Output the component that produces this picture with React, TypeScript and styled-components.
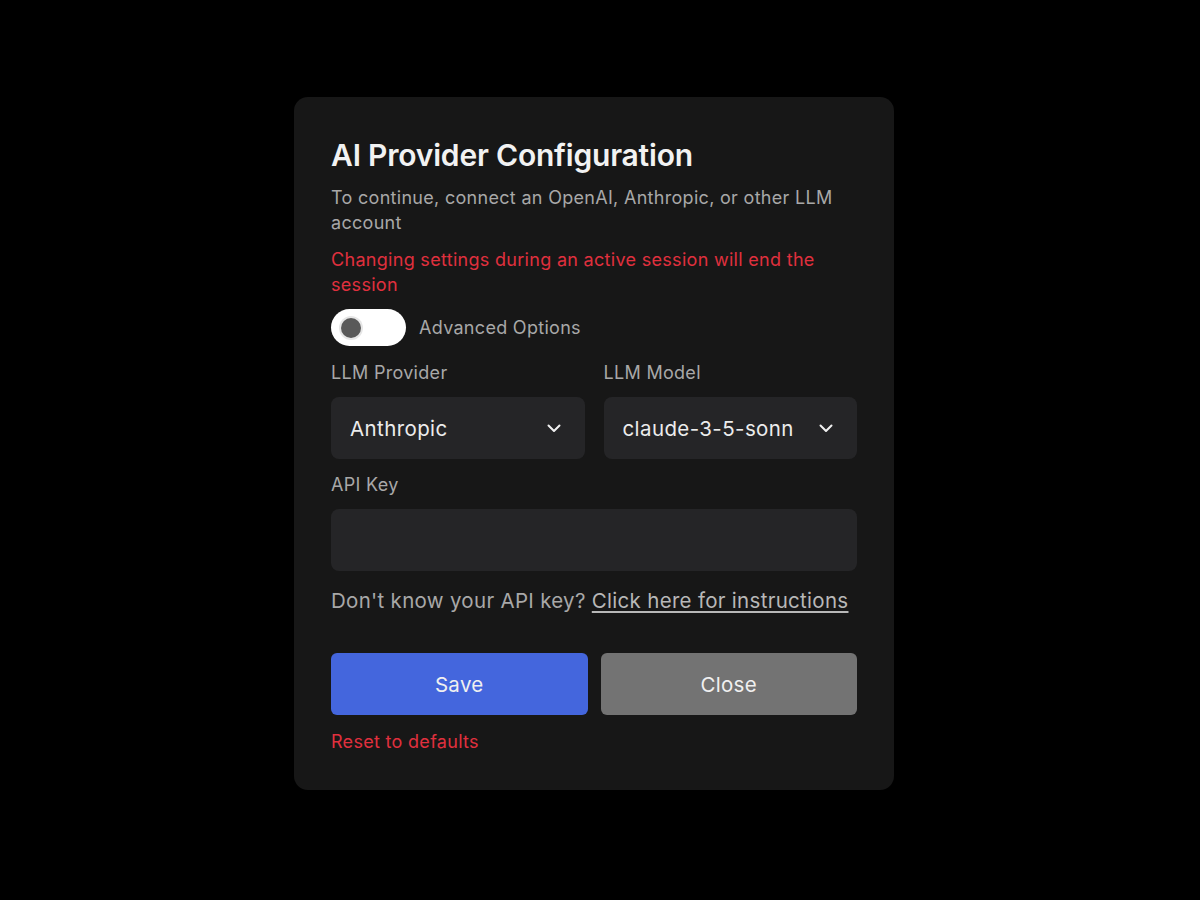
import React, { useState } from "react";
import styled, { createGlobalStyle } from "styled-components";

const GlobalStyle = createGlobalStyle`
  html, body {
    margin: 0;
    padding: 0;
    background: #000;
    font-family: Inter, "Noto Sans", "Liberation Sans", sans-serif;
  }
  * { box-sizing: border-box; }
`;

const Page = styled.div`
  width: 1200px;
  height: 900px;
  display: flex;
  padding: 97px 0 0 294px;
`;

const Modal = styled.div`
  width: 600px;
  height: 693px;
  background: #171717;
  border-radius: 14px;
  padding: 38px 37px 0 37px;
  display: flex;
  flex-direction: column;
`;

const Title = styled.h2`
  margin: 0;
  font-size: 30px;
  font-weight: 600;
  color: #f2f2f2;
  letter-spacing: -0.2px;
  line-height: 40px;
`;

const Subtitle = styled.p`
  margin: 10px 0 0;
  font-size: 18px;
  letter-spacing: 0.3px;
  line-height: 25px;
  color: #a8a8a8;
`;

const Warning = styled.p`
  margin: 12px 0 0;
  font-size: 18px;
  letter-spacing: 0.3px;
  line-height: 25px;
  color: #e0303e;
`;

const ToggleRow = styled.div`
  display: flex;
  align-items: center;
  gap: 13px;
  margin-top: 12px;
`;

const Switch = styled.button<{ $on: boolean }>`
  width: 75px;
  height: 37px;
  border-radius: 19px;
  border: none;
  background: ${({ $on }) => ($on ? "#4466dd" : "#fff")};
  padding: 0 10px;
  display: flex;
  align-items: center;
  justify-content: ${({ $on }) => ($on ? "flex-end" : "flex-start")};
  cursor: pointer;
`;

const Knob = styled.span`
  width: 20px;
  height: 20px;
  border-radius: 50%;
  background: #595959;
  box-shadow: 0 0 0 2px #e6e6e6;
`;

const ToggleLabel = styled.span`
  font-size: 18px;
  letter-spacing: 0.3px;
  color: #a8a8a8;
`;

const FieldGrid = styled.div`
  display: grid;
  grid-template-columns: minmax(0, 1fr) minmax(0, 1fr);
  column-gap: 19px;
  margin-top: 14px;
`;

const Field = styled.div`
  display: flex;
  flex-direction: column;
  min-width: 0;
`;

const Label = styled.label<{ $gap?: number }>`
  font-size: 18px;
  letter-spacing: 0.3px;
  color: #a8a8a8;
  line-height: 25px;
  margin-bottom: ${({ $gap }) => $gap ?? 12}px;
`;

const SelectBox = styled.div`
  height: 62px;
  background: #252527;
  border-radius: 8px;
  display: flex;
  align-items: center;
  padding: 0 24px 0 19px;
  font-size: 20.5px;
  letter-spacing: 0.4px;
  color: #ececec;
  white-space: nowrap;
  min-width: 0;
`;

const SelectText = styled.span`
  flex: 1;
  min-width: 0;
  overflow: hidden;
  margin-right: 26px;
`;

const KeyField = styled(Field)`
  margin-top: 13px;
`;

const Input = styled.input`
  height: 62px;
  background: #252527;
  border: none;
  border-radius: 8px;
  outline: none;
  padding: 0 19px;
  font-size: 20px;
  color: #ececec;
  font-family: inherit;
`;

const HelpText = styled.p`
  margin: 16px 0 0;
  font-size: 20.5px;
  letter-spacing: 0.3px;
  line-height: 28px;
  color: #a8a8a8;
  white-space: nowrap;
`;

const HelpLink = styled.a`
  color: #b8b8b8;
  text-decoration: underline;
  text-underline-offset: 3px;
`;

const ButtonRow = styled.div`
  display: grid;
  grid-template-columns: 1fr 1fr;
  column-gap: 13px;
  margin-top: 38px;
`;

const Button = styled.button<{ $variant: "primary" | "secondary" }>`
  height: 62px;
  border: none;
  border-radius: 6px;
  font-family: inherit;
  font-size: 20.5px;
  letter-spacing: 0.3px;
  color: #f0f0f0;
  background: ${({ $variant }) => ($variant === "primary" ? "#4466dd" : "#737373")};
  cursor: pointer;
`;

const ResetLink = styled.a`
  margin-top: 14px;
  font-size: 18px;
  letter-spacing: 0.3px;
  line-height: 25px;
  color: #e0303e;
  cursor: pointer;
`;

const Chevron = () => (
  <svg width="14" height="9" viewBox="0 0 14 9" fill="none">
    <path d="M1.5 1.5L7 7L12.5 1.5" stroke="#f0f0f0" strokeWidth="2" strokeLinecap="round" strokeLinejoin="round" />
  </svg>
);

const App: React.FC = () => {
  const [advanced, setAdvanced] = useState(false);

  return (
    <>
      <GlobalStyle />
      <Page>
        <Modal>
          <Title>AI Provider Configuration</Title>
          <Subtitle>To continue, connect an OpenAI, Anthropic, or other LLM account</Subtitle>
          <Warning>Changing settings during an active session will end the session</Warning>
          <ToggleRow>
            <Switch $on={advanced} onClick={() => setAdvanced(!advanced)}>
              <Knob />
            </Switch>
            <ToggleLabel>Advanced Options</ToggleLabel>
          </ToggleRow>
          <FieldGrid>
            <Field>
              <Label>LLM Provider</Label>
              <SelectBox>
                <SelectText>Anthropic</SelectText>
                <Chevron />
              </SelectBox>
            </Field>
            <Field>
              <Label>LLM Model</Label>
              <SelectBox>
                <SelectText>claude-3-5-sonnet</SelectText>
                <Chevron />
              </SelectBox>
            </Field>
          </FieldGrid>
          <KeyField>
            <Label>API Key</Label>
            <Input type="password" />
          </KeyField>
          <HelpText>
            Don't know your API key? <HelpLink>Click here for instructions</HelpLink>
          </HelpText>
          <ButtonRow>
            <Button $variant="primary">Save</Button>
            <Button $variant="secondary">Close</Button>
          </ButtonRow>
          <ResetLink>Reset to defaults</ResetLink>
        </Modal>
      </Page>
    </>
  );
};

export default App;
